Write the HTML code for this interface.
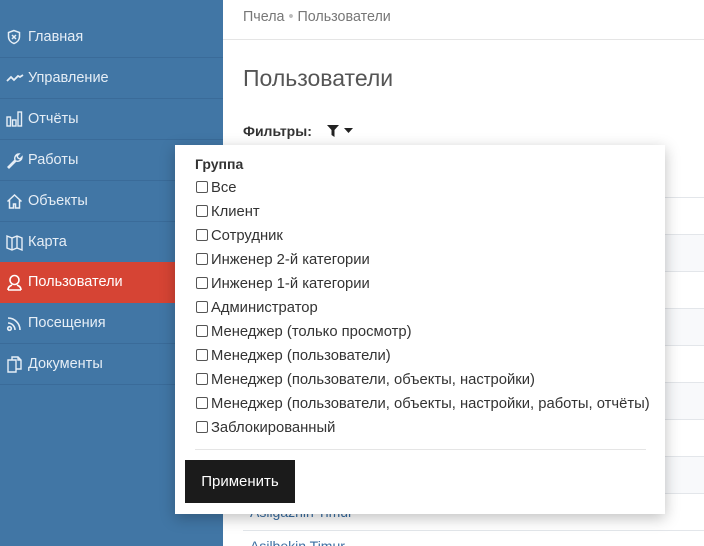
<!DOCTYPE html>
<html><head><meta charset="utf-8"><style>
*{box-sizing:border-box;margin:0;padding:0}
html,body{width:704px;height:546px;overflow:hidden}
body{font-family:"Liberation Sans",sans-serif;background:#fff;position:relative;color:#333}
.sb{position:absolute;left:0;top:0;width:223px;height:546px;background:#4176a5}
.it{position:absolute;left:0;width:223px;height:41px;border-bottom:1px solid #3a6b99;color:#e6eef6;font-size:14.5px;line-height:40px;padding-left:28px}
.it svg{position:absolute;left:6px;top:12px}
.it.a{background:#d64434;color:#fff;border-bottom:none}
.bc{position:absolute;left:243px;top:9px;font-size:14.3px;color:#777}
.hl{position:absolute;left:223px;right:0;top:39px;border-top:1px solid #e5e5e5}
h1{position:absolute;left:243px;top:65px;font-size:23px;font-weight:normal;color:#555}
.fl{position:absolute;left:243px;top:123px;font-size:14px;font-weight:bold;color:#333}
.row{position:absolute;left:243px;right:0;height:37px;border-top:1px solid #e3e6ea}
.row.s{background:#f8f9fb}
.lk{position:absolute;left:250px;color:#3b6fa3;font-size:14px}
.pop{position:absolute;left:175px;top:145px;width:490px;height:369px;background:#fff;box-shadow:0 4px 14px rgba(0,0,0,.25)}
.g{position:absolute;left:20px;top:11px;font-size:14px;font-weight:bold;color:#333}
.cb{position:absolute;left:21px;font-size:14.8px;color:#333;white-space:nowrap;line-height:16px}
.cb i{display:inline-block;width:12px;height:12px;border:1px solid #555;border-radius:2px;vertical-align:-1px;margin-right:3px}
.hr{position:absolute;left:20px;top:304px;width:451px;border-top:1px solid #e5e5e5}
.btn{position:absolute;left:10px;top:315px;width:110px;height:43px;background:#1b1b1b;color:#fff;font-size:15px;line-height:43px;text-align:center}
</style></head><body>
<div class="sb">
<div class="it" style="top:17px"><svg width="16" height="16" viewBox="0 0 16 16" fill="none" stroke="#e6eef6" stroke-width="1.5"><path d="M8 1.5L2.5 3.5v4c0 3.5 2.5 6 5.5 7 3-1 5.5-3.5 5.5-7v-4z"/><path d="M6 6l4 4M10 6l-4 4"/></svg>Главная</div>
<div class="it" style="top:58px"><svg width="18" height="16" viewBox="0 0 18 16" fill="none" stroke="#e6eef6" stroke-width="1.8"><path d="M1 11l4-4 3 3 4-4 2 1 3-2"/></svg>Управление</div>
<div class="it" style="top:99px"><svg width="17" height="16" viewBox="0 0 17 16" fill="none" stroke="#e6eef6" stroke-width="1.4"><rect x="1" y="6" width="3.5" height="9"/><rect x="6.5" y="9" width="3.5" height="6"/><rect x="12" y="1" width="3.5" height="14"/></svg>Отчёты</div>
<div class="it" style="top:140px"><svg width="17" height="17" viewBox="0 0 17 17" fill="none" stroke="#e6eef6" stroke-width="1.4"><path d="M2 15l7-7c-1-3 1-6 4-6l-2 2 1 2 2 1 2-2c0 3-3 5-6 4l-7 7z"/></svg>Работы</div>
<div class="it" style="top:181px"><svg width="17" height="17" viewBox="0 0 17 17" fill="none" stroke="#e6eef6" stroke-width="1.5"><path d="M1.5 8.5L8.5 2l7 6.5M3.5 7v8h4v-4h2v4h4V7"/></svg>Объекты</div>
<div class="it" style="top:222px"><svg width="17" height="17" viewBox="0 0 17 17" fill="none" stroke="#e6eef6" stroke-width="1.4"><path d="M1 2l5 2 5-2 5 2v12l-5-2-5 2-5-2zM6 4v12M11 2v12"/></svg>Карта</div>
<div class="it a" style="top:262px"><svg width="17" height="17" viewBox="0 0 17 17" fill="none" stroke="#fff" stroke-width="1.6"><circle cx="8.5" cy="6" r="4.5"/><path d="M2 16c0-3 2-4 4-5M15 16c0-3-2-4-4-5M2 16h13"/></svg>Пользователи</div>
<div class="it" style="top:303px"><svg width="17" height="17" viewBox="0 0 17 17" fill="none" stroke="#e6eef6" stroke-width="1.6"><circle cx="3.5" cy="13.5" r="1.8"/><path d="M2 8a7 7 0 0 1 7 7M2 3a12 12 0 0 1 12 12"/></svg>Посещения</div>
<div class="it" style="top:344px"><svg width="17" height="17" viewBox="0 0 17 17" fill="none" stroke="#e6eef6" stroke-width="1.4"><path d="M2 4h8v12H2zM6 4V1h6l3 3v9h-5M12 1v3h3"/></svg>Документы</div>
</div>
<div class="bc">Пчела <span style="color:#bbb">•</span> Пользователи</div>
<div class="hl"></div>
<h1>Пользователи</h1>
<div class="fl">Фильтры: <svg style="vertical-align:-2px;margin-left:10px" width="28" height="14" viewBox="0 0 28 14"><path d="M1 1h12l-4.5 5v7l-3-2V6z" fill="#222"/><path d="M18 4h9l-4.5 5z" fill="#222"/></svg></div>
<div class="row" style="top:197px"></div><div class="row s" style="top:234px"></div><div class="row" style="top:271px"></div><div class="row s" style="top:308px"></div><div class="row" style="top:345px"></div><div class="row s" style="top:382px"></div><div class="row" style="top:419px"></div><div class="row s" style="top:456px"></div><div class="row" style="top:493px"></div><div class="row" style="top:530px;height:16px"></div>
<div class="lk" style="top:504px">Asilgazhin Timur</div>
<div class="lk" style="top:538px">Asilbekin Timur</div>
<div class="pop">
<div class="g">Группа</div>
<div class="cb" style="top:35px"><i></i>Все</div>
<div class="cb" style="top:59px"><i></i>Клиент</div>
<div class="cb" style="top:83px"><i></i>Сотрудник</div>
<div class="cb" style="top:107px"><i></i>Инженер 2-й категории</div>
<div class="cb" style="top:131px"><i></i>Инженер 1-й категории</div>
<div class="cb" style="top:155px"><i></i>Администратор</div>
<div class="cb" style="top:179px"><i></i>Менеджер (только просмотр)</div>
<div class="cb" style="top:203px"><i></i>Менеджер (пользователи)</div>
<div class="cb" style="top:227px"><i></i>Менеджер (пользователи, объекты, настройки)</div>
<div class="cb" style="top:251px"><i></i>Менеджер (пользователи, объекты, настройки, работы, отчёты)</div>
<div class="cb" style="top:275px"><i></i>Заблокированный</div>
<div class="hr"></div>
<div class="btn">Применить</div>
</div>
</body></html>
